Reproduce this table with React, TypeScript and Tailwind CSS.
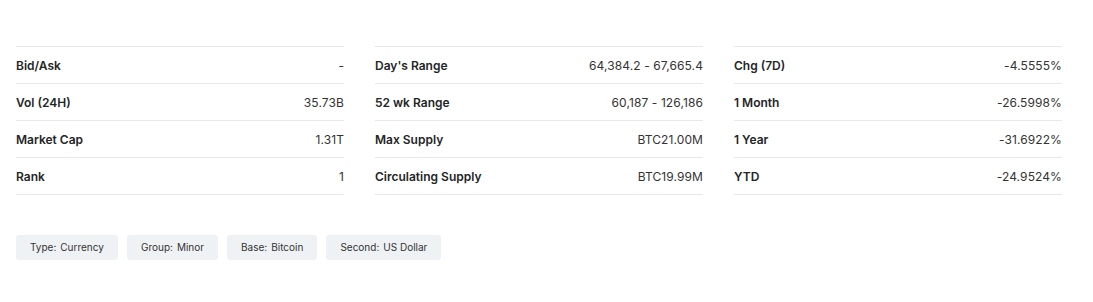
import React from 'react'

const columns = [
	[
		['Bid/Ask', '-'],
		['Vol (24H)', '35.73B'],
		['Market Cap', '1.31T'],
		['Rank', '1'],
	],
	[
		["Day's Range", '64,384.2 - 67,665.4'],
		['52 wk Range', '60,187 - 126,186'],
		['Max Supply', 'BTC21.00M'],
		['Circulating Supply', 'BTC19.99M'],
	],
	[
		['Chg (7D)', '-4.5555%'],
		['1 Month', '-26.5998%'],
		['1 Year', '-31.6922%'],
		['YTD', '-24.9524%'],
	],
]

const tags = [
	['Type', 'Currency'],
	['Group', 'Minor'],
	['Base', 'Bitcoin'],
	['Second', 'US Dollar'],
]

const StatRow = ({ label, value }: { label: string; value: string }) => {
	return (
		<div className="flex h-[37px] items-center justify-between border-b border-[#e6e9eb] pt-px">
			<span className="text-[12px] font-semibold text-[#232526]">{label}</span>
			<span className="text-[12px] tracking-[0.1px] text-[#333]">{value}</span>
		</div>
	)
}

const Tag = ({ name, value }: { name: string; value: string }) => {
	return (
		<div className="flex h-[25px] items-center rounded-[3px] bg-[#eff2f5] px-[14px] text-[10px] text-[#333]">
			<span>{name}:</span>
			<span className="ml-[4px]">{value}</span>
		</div>
	)
}

export default function App() {
	return (
		<div
			className="h-[302px] bg-white px-4 pt-[46px]"
			style={{ fontFamily: 'Inter, "Noto Sans", sans-serif' }}
		>
			<div className="grid w-[1046px] grid-cols-3 gap-x-[31px]">
				{columns.map((rows, i) => (
					<div key={i} className="border-t border-[#e6e9eb]">
						{rows.map(([label, value]) => (
							<StatRow key={label} label={label} value={value} />
						))}
					</div>
				))}
			</div>

			<div className="mt-[40px] flex gap-[9px]">
				{tags.map(([name, value]) => (
					<Tag key={name} name={name} value={value} />
				))}
			</div>
		</div>
	)
}
